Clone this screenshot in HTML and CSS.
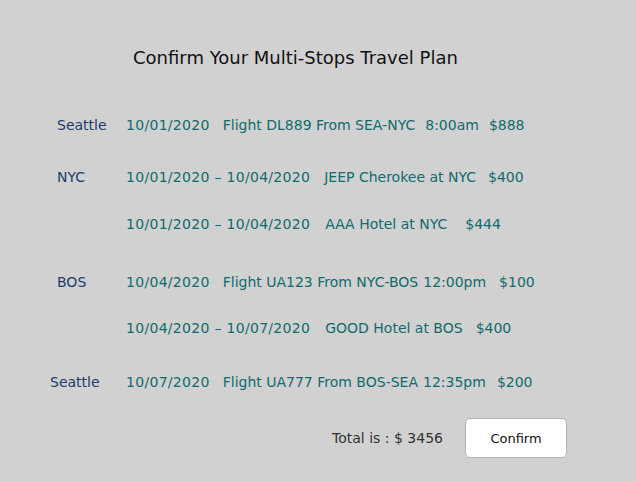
FILE: index.html
```html
<!DOCTYPE html>
<html>
<head>
<meta charset="utf-8">
<link rel="stylesheet" href="styles.css">
</head>
<body>
<div class="page">
  <h1 class="title">Confirm Your Multi-Stops Travel Plan</h1>
  <div class="plan">
    <div class="row r1">
      <span class="city">Seattle</span>
      <span class="item"><span class="date">10/01/2020</span><span class="g13">Flight DL889 From SEA-NYC</span><span class="g10">8:00am</span><span class="g10">$888</span></span>
    </div>
    <div class="row r2">
      <span class="city">NYC</span>
      <span class="item"><span class="date">10/01/2020 – 10/04/2020</span><span class="g14">JEEP Cherokee at NYC</span><span class="g12">$400</span></span>
    </div>
    <div class="row r3">
      <span class="city"></span>
      <span class="item"><span class="date">10/01/2020 – 10/04/2020</span><span class="g15">AAA Hotel at NYC</span><span class="g18">$444</span></span>
    </div>
    <div class="row r4">
      <span class="city">BOS</span>
      <span class="item"><span class="date">10/04/2020</span><span class="g13">Flight UA123 From NYC-BOS</span><span class="g4">12:00pm</span><span class="g13">$100</span></span>
    </div>
    <div class="row r5">
      <span class="city"></span>
      <span class="item"><span class="date">10/04/2020 – 10/07/2020</span><span class="g15">GOOD Hotel at BOS</span><span class="g13">$400</span></span>
    </div>
    <div class="row r6">
      <span class="city city-last">Seattle</span>
      <span class="item"><span class="date">10/07/2020</span><span class="g13">Flight UA777 From BOS-SEA</span><span class="g4">12:35pm</span><span class="g11">$200</span></span>
    </div>
  </div>
  <div class="footer">
    <span class="total">Total is : $ 3456</span>
    <button class="confirm">Confirm</button>
  </div>
</div>
</body>
</html>
```
FILE: styles.css
```css
html, body {
  margin: 0;
  padding: 0;
  background: #d1d1d1;
}
body {
  font-family: "DejaVu Sans", "Liberation Sans", sans-serif;
  width: 636px;
  height: 481px;
  overflow: hidden;
}
.page {
  padding-top: 48px;
}
.title {
  margin: 0 0 0 133px;
  font-size: 18px;
  line-height: 20px;
  font-weight: normal;
  color: #111;
}
.plan {
  margin-top: 47px;
}
.row {
  display: flex;
  align-items: center;
  height: 20px;
  font-size: 14px;
  line-height: 20px;
}
.r2 { margin-top: 32px; }
.r3 { margin-top: 27px; }
.r4 { margin-top: 38px; }
.r5 { margin-top: 26px; }
.r6 { margin-top: 34px; }
.city {
  width: 69px;
  padding-left: 57px;
  color: #1b3c6b;
}
.city-last {
  padding-left: 50px;
  width: 76px;
}
.item {
  display: flex;
  color: #106b6b;
  white-space: nowrap;
}
.date {
  letter-spacing: 0.3px;
}
.g4 { margin-left: 5px; }
.g10 { margin-left: 10px; }
.g11 { margin-left: 11px; }
.g12 { margin-left: 12px; }
.g13 { margin-left: 13px; }
.g14 { margin-left: 14px; }
.g15 { margin-left: 15px; }
.g18 { margin-left: 18px; }
.footer {
  margin-top: 26px;
  display: flex;
  justify-content: flex-end;
  align-items: center;
  gap: 22px;
  padding-right: 69px;
}
.total {
  font-size: 14px;
  color: #333;
}
.confirm {
  width: 102px;
  height: 40px;
  background: #fff;
  border: 1px solid #b3b3b3;
  border-radius: 5px;
  font-family: "DejaVu Sans", "Liberation Sans", sans-serif;
  font-size: 13px;
  color: #111;
  padding: 0;
}
```
